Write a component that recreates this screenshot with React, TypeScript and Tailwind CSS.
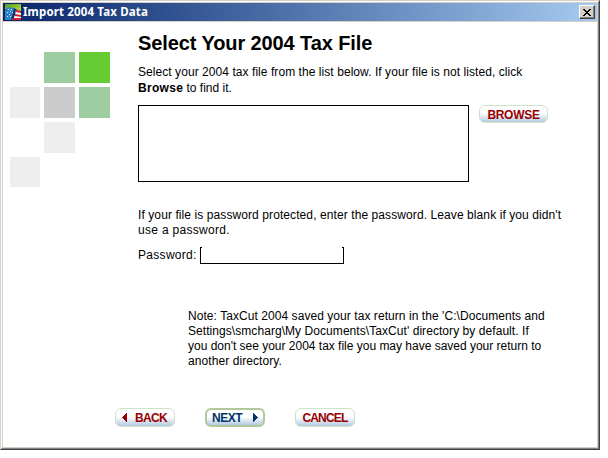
import React from "react";

function TitleIcon() {
  return (
    <svg width="16" height="16" viewBox="0 0 16 16" className="block shrink-0">
      <defs>
        <linearGradient id="leaf" x1="0" y1="0" x2="1" y2="1">
          <stop offset="0" stopColor="#4f9a1c" />
          <stop offset="1" stopColor="#c4e23c" />
        </linearGradient>
      </defs>
      <rect width="16" height="16" fill="#12306f" />
      <path d="M0 0h16v7L10 5H0z" fill="url(#leaf)" />
      <path d="M0 6l3-3 7 1-1 5-2 7H0z" fill="#2d84c4" />
      <path d="M9 4l3 2-2 5-3 5H6l2-7z" fill="#12306f" />
      <path d="M11 6l5 1v9H8l2-5z" fill="#fff" />
      <path d="M11 6l5 1v2l-5-1zM10 10l6 1v2l-6-1zM8 14h8v2H7z" fill="#d4212b" />
      <path d="M3 5h1v1H3zM6 5h1v1H6zM5 7h1v1H5zM2 8h1v1H2zM7 8h1v1H7zM4 10h1v1H4zM2 12h1v1H2zM5 12h1v1H5z" fill="#d4f0ff" />
    </svg>
  );
}

function TitleBar() {
  return (
    <div className="flex h-[18px] items-center bg-linear-to-r from-[#0a246a] to-[#a6caf0] pl-[2px] pr-[2px]">
      <TitleIcon />
      <span className="ml-[2px] grow whitespace-nowrap font-['Noto_Sans','Open_Sans',sans-serif] text-[11.5px] font-bold leading-[18px] tracking-[0.15px] text-white">
        Import 2004 Tax Data
      </span>
      <button
        aria-label="Close"
        className="flex h-[14px] w-4 items-center justify-center border border-t-white border-l-white border-r-[#404040] border-b-[#404040] bg-[#d4d0c8] shadow-[inset_-1px_-1px_0_#808080]"
      >
        <svg width="8" height="7" viewBox="0 0 8 7" shapeRendering="crispEdges">
          <path
            d="M0 0h2v1H0zM6 0h2v1H6zM1 1h2v1H1zM5 1h2v1H5zM2 2h4v1H2zM3 3h2v1H3zM2 4h4v1H2zM1 5h2v1H1zM5 5h2v1H5zM0 6h2v1H0zM6 6h2v1H6z"
            fill="#000"
          />
        </svg>
      </button>
    </div>
  );
}

function Squares() {
  return (
    <div className="ml-[7px] mt-[30px] grid h-[135px] w-[100px] shrink-0 grid-cols-[30px_31px_31px] grid-rows-[31px_31px_31px_30px] gap-1">
      <div className="col-start-2 bg-[#9ccc9f]" />
      <div className="bg-[#66cc33]" />
      <div className="bg-[#eeeeee]" />
      <div className="bg-[#cccccc]" />
      <div className="bg-[#9ccc9f]" />
      <div className="col-start-2 bg-[#eeeeee]" />
      <div className="col-start-1 bg-[#eeeeee]" />
    </div>
  );
}

function Arrow({ left = false }: { left?: boolean }) {
  return (
    <svg width="5" height="9" viewBox="0 0 5 9" className="shrink-0" shapeRendering="crispEdges">
      <path
        d={left ? "M4 0h1v9H4zM3 1h1v7H3zM2 2h1v5H2zM1 3h1v3H1zM0 4h1v1H0z" : "M0 0h1v9H0zM1 1h1v7H1zM2 2h1v5H2zM3 3h1v3H3zM4 4h1v1H4z"}
        fill="currentColor"
      />
    </svg>
  );
}

const pill =
  "flex items-center whitespace-nowrap rounded-[6px] bg-linear-to-b from-white from-45% to-[#b4cae0] font-['Liberation_Sans',Arial,sans-serif] text-[12px] font-bold leading-none";

export default function App() {
  return (
    <div className="h-[458px] w-[608px] bg-white font-['Liberation_Sans',Arial,sans-serif] text-[12px] leading-[15px] text-black">
      <div className="h-[450px] w-[600px] border border-t-[#d4d0c8] border-l-[#d4d0c8] border-r-[#404040] border-b-[#404040]">
        <div className="h-full border border-t-white border-l-white border-r-[#808080] border-b-[#808080]">
          <div className="h-full border border-[#d4d0c8]">
            <TitleBar />
            <div className="flex h-[379px] border-t border-[#d4d0c8]">
              <Squares />
              <main className="ml-[28px] whitespace-nowrap pt-[9px]">
                <h1 className="h-[24px] text-[20px] font-bold leading-[24px] tracking-[-0.1px]">Select Your 2004 Tax File</h1>
                <p className="mt-[9px] leading-[16px]">
                  <span className="block tracking-[0.06px]">Select your 2004 tax file from the list below. If your file is not listed, click</span>
                  <span className="block"><b className="tracking-[0.3px]">Browse</b> to find it.</span>
                </p>
                <div className="mt-[9px] flex items-start">
                  <div className="h-[77px] w-[331px] border border-black" />
                  <button className={`${pill} ml-[10px] h-[18px] w-[69px] justify-center border border-[#cfe3c8] pt-px tracking-[-0.3px] text-[#990000]`}>
                    <span>BROWSE</span>
                  </button>
                </div>
                <p className="mt-[26px]">
                  <span className="block tracking-[0.09px]">If your file is password protected, enter the password. Leave blank if you didn't</span>
                  <span className="block tracking-[0.3px]">use a password.</span>
                </p>
                <div className="mt-[9px] flex h-[17px] items-start">
                  <label className="w-[62px] leading-[16px] tracking-[0.3px]">Password:</label>
                  <div className="flex h-[17px] w-[144px] justify-between border-x border-b border-black">
                    <i className="h-px w-px bg-black" />
                    <i className="h-px w-px bg-black" />
                  </div>
                </div>
                <p className="ml-[50px] mt-[45px]">
                  <span className="block tracking-[0.06px]">Note: TaxCut 2004 saved your tax return in the 'C:\Documents and</span>
                  <span className="block tracking-[0.06px]">Settings\smcharg\My Documents\TaxCut' directory by default. If</span>
                  <span className="block tracking-[-0.01px]">you don't see your 2004 tax file you may have saved your return to</span>
                  <span className="block tracking-[0.08px]">another directory.</span>
                </p>
              </main>
            </div>
            <footer className="ml-[112px] mt-[8px] flex gap-[30px]">
              <button className={`${pill} h-[19px] w-[60px] gap-[8px] border border-[#cfe3c8] pl-[6px] tracking-[-0.7px] text-[#990000]`}>
                <Arrow left />
                <span>BACK</span>
              </button>
              <button className={`${pill} h-[19px] w-[60px] border-2 border-[#b0c89c] pl-[5px] pr-[5px] justify-between tracking-[-0.5px] text-[#003366]`}>
                <span>NEXT</span>
                <Arrow />
              </button>
              <button className={`${pill} h-[19px] w-[60px] justify-center border border-[#cfe3c8] tracking-[-0.8px] text-[#990000]`}>
                <span>CANCEL</span>
              </button>
            </footer>
          </div>
        </div>
      </div>
    </div>
  );
}
